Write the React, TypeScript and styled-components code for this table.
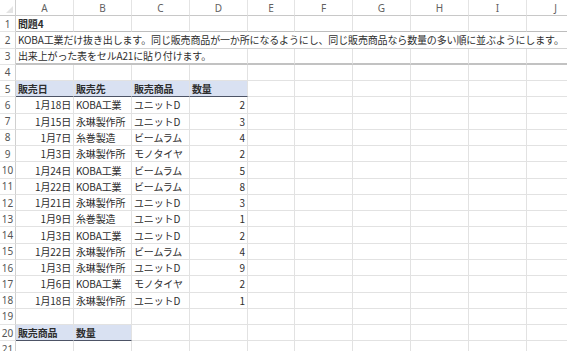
import React from "react"
import styled, { createGlobalStyle } from "styled-components"

const GlobalStyle = createGlobalStyle`
  html, body {
    margin: 0;
    padding: 0;
    background: #fff;
  }
  body {
    font-family: "Noto Sans CJK JP", "Noto Sans", sans-serif;
    overflow: hidden;
  }
`

const COLS = ["A", "B", "C", "D", "E", "F", "G", "H", "I", "J"]
const WIDTHS = [58, 58, 58, 58, 47, 58, 58, 58, 58, 58]

const Viewport = styled.div`
  width: 567px;
  height: 351px;
  overflow: hidden;
`

const Sheet = styled.div`
  display: grid;
  grid-template-columns: 16px ${WIDTHS.map(w => `${w}px`).join(" ")};
  grid-template-rows: 16px repeat(21, 16.27px);
  width: max-content;
`

const Corner = styled.div`
  position: relative;
  background: #fff;
  border-right: 1px solid #d0d0d0;
  border-bottom: 1px solid #c8c8c8;
  box-sizing: border-box;
  &::after {
    content: "";
    position: absolute;
    right: 2px;
    bottom: 2px;
    border-left: 7px solid transparent;
    border-bottom: 7px solid #e4e4e4;
  }
`

const ColHead = styled.div`
  display: flex;
  align-items: center;
  justify-content: center;
  box-sizing: border-box;
  border-right: 1px solid #e4e4e4;
  border-bottom: 1px solid #c8c8c8;
  font-family: "Noto Sans", "Liberation Sans", sans-serif;
  font-size: 10px;
  color: #616161;
`

const RowHead = styled.div`
  display: flex;
  align-items: center;
  justify-content: center;
  box-sizing: border-box;
  border-right: 1px solid #d0d0d0;
  border-bottom: 1px solid #e4e4e4;
  font-family: "Noto Sans", "Liberation Sans", sans-serif;
  font-size: 10px;
  color: #555;
`

type Line = "grid" | "dark" | "mid" | "thick"

const lineCss: Record<Line, string> = {
  grid: "1px solid #e2e2e2",
  dark: "1px solid #bdbdbd",
  mid: "1px solid #d2d2d2",
  thick: "2px solid #c2c2c2",
}

const Cell = styled.div<{
  $span: number
  $align: "left" | "right"
  $bold: boolean
  $head: boolean
  $line: Line
}>`
  grid-column: span ${p => p.$span};
  display: flex;
  align-items: center;
  justify-content: ${p => (p.$align === "right" ? "flex-end" : "flex-start")};
  box-sizing: border-box;
  padding: 0 2px 0 2px;
  border-right: 1px solid #e2e2e2;
  border-bottom: ${p => (p.$head ? "1px solid #4d5466" : lineCss[p.$line])};
  background: ${p => (p.$head ? "#d9e1f2" : "#fff")};
  font-size: 10px;
  letter-spacing: -0.15px;
  font-weight: ${p => (p.$bold ? 700 : 400)};
  color: #2e2e2e;
  white-space: nowrap;
  overflow: visible;
`

type CellDef = {
  text?: string
  align?: "left" | "right"
  bold?: boolean
  head?: boolean
  span?: number
}

type RowDef = { cells: CellDef[]; line?: Line }

const blank = (n: number): CellDef[] => Array.from({ length: n }, () => ({}))

const records: [string, string, string, number][] = [
  ["1月18日", "KOBA工業", "ユニットD", 2],
  ["1月15日", "永琳製作所", "ユニットD", 3],
  ["1月7日", "糸巻製造", "ビームラム", 4],
  ["1月3日", "永琳製作所", "モノタイヤ", 2],
  ["1月24日", "KOBA工業", "ビームラム", 5],
  ["1月22日", "KOBA工業", "ビームラム", 8],
  ["1月21日", "永琳製作所", "ユニットD", 3],
  ["1月9日", "糸巻製造", "ユニットD", 1],
  ["1月3日", "KOBA工業", "ユニットD", 2],
  ["1月22日", "永琳製作所", "ビームラム", 4],
  ["1月3日", "永琳製作所", "ユニットD", 9],
  ["1月6日", "KOBA工業", "モノタイヤ", 2],
  ["1月18日", "永琳製作所", "ユニットD", 1],
]

const rows: RowDef[] = [
  { cells: [{ text: "問題4", bold: true }, ...blank(9)], line: "dark" },
  {
    cells: [
      {
        text: "KOBA工業だけ抜き出します。同じ販売商品が一か所になるようにし、同じ販売商品なら数量の多い順に並ぶようにします。",
        span: 10,
      },
    ],
    line: "mid",
  },
  { cells: [{ text: "出来上がった表をセルA21に貼り付けます。", span: 4 }, ...blank(6)], line: "thick" },
  { cells: blank(10) },
  {
    cells: [
      { text: "販売日", bold: true, head: true },
      { text: "販売先", bold: true, head: true },
      { text: "販売商品", bold: true, head: true },
      { text: "数量", bold: true, head: true },
      ...blank(6),
    ],
  },
  ...records.map(([date, who, item, qty]) => ({
    cells: [
      { text: date, align: "right" as const },
      { text: who },
      { text: item },
      { text: String(qty), align: "right" as const },
      ...blank(6),
    ],
  })),
  { cells: blank(10) },
  {
    cells: [
      { text: "販売商品", bold: true, head: true },
      { text: "数量", bold: true, head: true },
      ...blank(8),
    ],
  },
  { cells: blank(10) },
]

export default function App() {
  return (
    <Viewport>
      <GlobalStyle />
      <Sheet>
        <Corner />
        {COLS.map(c => (
          <ColHead key={c}>{c}</ColHead>
        ))}
        {rows.map((row, r) => (
          <React.Fragment key={r}>
            <RowHead>{r + 1}</RowHead>
            {row.cells.map((cell, i) => (
              <Cell
                key={i}
                $span={cell.span ?? 1}
                $align={cell.align ?? "left"}
                $bold={!!cell.bold}
                $head={!!cell.head}
                $line={row.line ?? "grid"}
              >
                {cell.text}
              </Cell>
            ))}
          </React.Fragment>
        ))}
      </Sheet>
    </Viewport>
  )
}
